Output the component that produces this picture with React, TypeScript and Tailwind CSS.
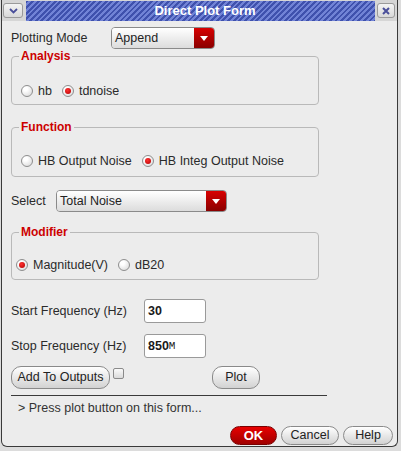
import React from 'react';

function Radio({ checked = false }: { checked?: boolean }) {
  return (
    <span className="inline-flex h-[12px] w-[12px] shrink-0 items-center justify-center rounded-full border border-[#8e8e8e] bg-[radial-gradient(circle_at_35%_30%,#ffffff_20%,#d4d4d4_100%)]">
      {checked && <span className="h-[6px] w-[6px] rounded-full bg-[radial-gradient(circle_at_40%_35%,#ff3030,#b00000)]" />}
    </span>
  );
}

function RadioItem({ label, checked = false }: { label: string; checked?: boolean }) {
  return (
    <span className="flex items-center gap-[5px]">
      <Radio checked={checked} />
      <span>{label}</span>
    </span>
  );
}

function Combo({ value, className }: { value: string; className: string }) {
  return (
    <div className={`flex h-[22px] overflow-hidden rounded-[4px] border border-[#8a8a8a] ${className}`}>
      <div className="flex flex-1 items-center bg-gradient-to-b from-[#ffffff] to-[#dcdcdc] pl-[3px] text-[#222]">
        {value}
      </div>
      <div className="flex w-[20px] items-center justify-center bg-gradient-to-b from-[#d80000] to-[#8a0000]">
        <svg width="8" height="5" viewBox="0 0 8 5">
          <path d="M0 0 H8 L4 5 Z" fill="#ffffff" />
        </svg>
      </div>
    </div>
  );
}

function Group({ title, children, className }: { title: string; children: React.ReactNode; className: string }) {
  return (
    <fieldset className={`w-[308px] rounded-[4px] border border-[#b9b9b9] pl-[7px] ${className}`}>
      <legend className="px-[2px] text-[12px] leading-[12px] font-bold text-[#cc0000]">{title}</legend>
      {children}
    </fieldset>
  );
}

function Button({ label, className }: { label: string; className: string }) {
  return (
    <div className={`flex h-[23px] items-center justify-center rounded-[10px] border border-[#8a8a8a] bg-gradient-to-b from-[#ffffff] to-[#d2d2d2] text-[#222] ${className}`}>
      {label}
    </div>
  );
}

export default function App() {
  return (
    <div className="h-[451px] w-[401px] bg-[#dcdcdc] font-['Liberation_Sans',Arial,sans-serif] text-[12.5px] text-[#2a2a2a]">
      <div className="ml-[1px] flex h-[447px] w-[397px] flex-col overflow-hidden rounded-b-[6px] border-x border-b border-[#3a3a3a] bg-[#ececec]">
        {/* title bar */}
        <div className="flex h-[21px] items-center bg-[#d6d6d6]">
          <div className="ml-[1px] flex h-[15px] w-[20px] items-center justify-center rounded-[3px] border border-[#9a9a9a] bg-gradient-to-b from-[#f4f4f4] to-[#d8d8d8]">
            <svg width="9" height="6" viewBox="0 0 9 6">
              <path d="M1 1 L4.5 4.5 L8 1" fill="none" stroke="#4a4f9a" strokeWidth="1.8" />
            </svg>
          </div>
          <div className="ml-[3px] mt-[1px] flex h-[20px] flex-1 items-center justify-center bg-[repeating-linear-gradient(135deg,#3f51ad_0px,#3f51ad_2px,#7183d6_2px,#7183d6_4px)] pl-[9px] text-[13px] font-bold text-white">
            Direct Plot Form
          </div>
          <div className="ml-[2px] mr-[2px] flex h-[15px] w-[18px] items-center justify-center rounded-[3px] border border-[#9a9a9a] bg-gradient-to-b from-[#f4f4f4] to-[#d8d8d8]">
            <svg width="8" height="8" viewBox="0 0 8 8">
              <path d="M1 1 L7 7 M7 1 L1 7" stroke="#4a4f9a" strokeWidth="2" />
            </svg>
          </div>
        </div>

        <div className="pl-[9px]">
          {/* plotting mode */}
          <div className="mt-[6px] flex h-[22px] items-center">
            <span className="w-[100px]">Plotting Mode</span>
            <Combo value="Append" className="w-[104px]" />
          </div>

          <Group title="Analysis" className="mt-[1px] pb-[6px]">
            <div className="ml-[2px] mt-[22px] flex h-[14px] items-center gap-[10px]">
              <RadioItem label="hb" />
              <RadioItem label="tdnoise" checked />
            </div>
          </Group>

          <Group title="Function" className="mt-[16px] pb-[8px]">
            <div className="ml-[2px] mt-[21px] flex h-[14px] items-center gap-[10px]">
              <RadioItem label="HB Output Noise" />
              <RadioItem label="HB Integ Output Noise" checked />
            </div>
          </Group>

          {/* select */}
          <div className="mt-[13px] flex h-[22px] items-center">
            <span className="w-[45px]">Select</span>
            <Combo value="Total Noise" className="w-[171px]" />
          </div>

          <Group title="Modifier" className="mt-[14px] pb-[7px]">
            <div className="-ml-[3px] mt-[20px] flex h-[14px] items-center gap-[10px]">
              <RadioItem label="Magnitude(V)" checked />
              <RadioItem label="dB20" />
            </div>
          </Group>

          {/* frequencies */}
          <div className="mt-[19px] flex h-[24px] items-center">
            <span className="w-[133px]">Start Frequency (Hz)</span>
            <div className="flex h-[24px] w-[62px] items-center rounded-[3px] border border-[#9a9a9a] bg-white pl-[3px] font-bold text-[#1a1a1a]">
              30
            </div>
          </div>
          <div className="mt-[11px] flex h-[24px] items-center">
            <span className="w-[133px]">Stop Frequency (Hz)</span>
            <div className="flex h-[24px] w-[62px] items-center rounded-[3px] border border-[#9a9a9a] bg-white pl-[3px] font-bold text-[#1a1a1a]">
              850<span className="font-['Liberation_Mono',monospace] text-[11px] font-normal">M</span>
            </div>
          </div>

          {/* actions */}
          <div className="mt-[8px] flex h-[23px] items-start">
            <Button label="Add To Outputs" className="w-[99px]" />
            <span className="ml-[3px] mt-[2px] h-[11px] w-[11px] rounded-[2px] border border-[#8a8a8a] bg-gradient-to-b from-[#fafafa] to-[#dadada]" />
            <Button label="Plot" className="ml-[88px] w-[48px]" />
          </div>

          <div className="mt-[6px] h-[1px] w-[316px] bg-[#3a3a3a]" />

          <div className="mt-[5px] pl-[7px] leading-[15px] text-[#333]">&gt; Press plot button on this form...</div>
        </div>

        {/* dialog buttons */}
        <div className="mt-[10px] flex items-center justify-end gap-[4px] pr-[4px]">
          <div className="flex h-[19px] w-[47px] items-center justify-center rounded-[10px] border border-[#7a0000] bg-gradient-to-b from-[#e80000] to-[#a00000] text-[13px] font-bold text-white">
            OK
          </div>
          <div className="flex h-[19px] w-[58px] items-center justify-center rounded-[10px] border border-[#8a8a8a] bg-gradient-to-b from-[#ffffff] to-[#d2d2d2] text-[#222]">
            Cancel
          </div>
          <div className="flex h-[19px] w-[50px] items-center justify-center rounded-[10px] border border-[#8a8a8a] bg-gradient-to-b from-[#ffffff] to-[#d2d2d2] text-[#222]">
            Help
          </div>
        </div>
      </div>
    </div>
  );
}
